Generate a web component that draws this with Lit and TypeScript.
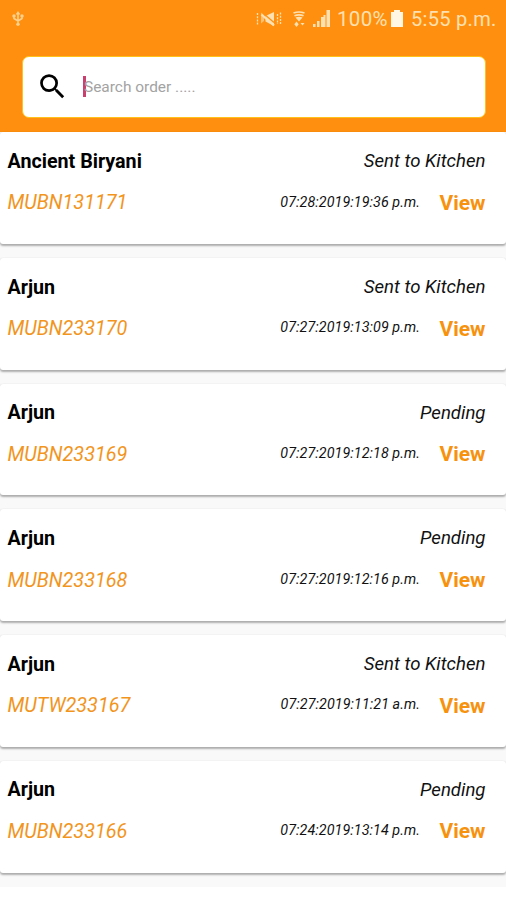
import { LitElement, html, css, svg } from "lit";
import { customElement, property } from "lit/decorators.js";

interface Order {
  customer: string;
  code: string;
  status: string;
  placed: string;
}

const ORDERS: Order[] = [
  { customer: "Ancient Biryani", code: "MUBN131171", status: "Sent to Kitchen", placed: "07:28:2019:19:36 p.m." },
  { customer: "Arjun", code: "MUBN233170", status: "Sent to Kitchen", placed: "07:27:2019:13:09 p.m." },
  { customer: "Arjun", code: "MUBN233169", status: "Pending", placed: "07:27:2019:12:18 p.m." },
  { customer: "Arjun", code: "MUBN233168", status: "Pending", placed: "07:27:2019:12:16 p.m." },
  { customer: "Arjun", code: "MUTW233167", status: "Sent to Kitchen", placed: "07:27:2019:11:21 a.m." },
  { customer: "Arjun", code: "MUBN233166", status: "Pending", placed: "07:24:2019:13:14 p.m." },
];

const usbIcon = svg`<path d="M6 1.5V13M2 5v2.5L6 10M10 5v2.5L6 10" fill="none" stroke="currentColor" stroke-width="1.6"/>
  <path d="M6 0l2.4 3.6H3.6z"/><circle cx="2" cy="5" r="1.7"/><circle cx="10" cy="5" r="1.7"/><circle cx="6" cy="13.2" r="1.7"/>`;

@customElement("status-bar")
export class StatusBar extends LitElement {
  static styles = css`
    :host { display: flex; align-items: center; height: 37px; color: #ffe0b0; padding: 0 10px 0 12px; }
    svg { display: block; fill: currentColor; flex: none; }
    .usb { margin-right: auto; color: #ffd08c; }
    .mute { margin-right: 10px; }
    .wifi { margin-right: 7px; }
    .signal { margin-right: 7px; }
    .text { font-size: 20px; line-height: 38px; white-space: nowrap; }
    .percent { width: 50px; margin-right: 4px; font-size: 20.500px; letter-spacing: 0.300px; }
    .battery { margin-right: 8px; }
    .clock { width: 85px; letter-spacing: 0.3px; }
  `;
  render() {
    return html`
      <svg class="usb" width="12" height="15" viewBox="0 0 12 15">${usbIcon}</svg>
      <svg class="mute" width="26" height="16" viewBox="0 0 26 16">
        <path d="M9.500 5L18 1v14l-8.500-4.500z" />
        <path d="M5 1.500v11l3-2.500V4z" opacity=".6" />
        <path d="M5.500 3.500L18 14.500" fill="none" stroke="currentColor" stroke-width="2.200" />
        <path d="M7.500 2.500L18 11.500" fill="none" stroke="#ff900f" stroke-width="1.200" />
        <path d="M1.500 2v11.500M21.500 3v10M24.500 1.500v12.500" fill="none" stroke="currentColor" stroke-width="1.300" stroke-dasharray="2 1.200" />
      </svg>
      <svg class="wifi" width="14" height="16" viewBox="0 0 14 16">
        <path d="M1.500 2q5.500-2 11 0M2.500 4.800q4.500-2 9 0" fill="none" stroke="currentColor" stroke-width="1.700" />
        <path d="M3.500 6.500q3.500-1.600 7 0L7 10.500zM4.500 10.500l2.200 2.800L4.500 16l-2.200-2.700zM8.500 12h4l-2 2.500z" />
      </svg>
      <svg class="signal" width="17" height="17" viewBox="0 0 17 17">
        <path d="M0 14h2.500v3H0zM4 11h2.500v6H4zM8 7h2.500v10H8zM10.500 5h2v12h-2zM13.500 0H17v17h-3.500z" />
      </svg>
      <span class="text percent">100%</span>
      <svg class="battery" width="12" height="17" viewBox="0 0 12 17">
        <path d="M3 0h6v2h3v15H0V2h3z" fill="#fff6e4" />
      </svg>
      <span class="text clock">5:55 p.m.</span>
    `;
  }
}

@customElement("search-box")
export class SearchBox extends LitElement {
  static styles = css`
    :host { display: flex; align-items: center; box-sizing: border-box; height: 62.500px; margin: 0 20.500px 0 21.500px;
      border: 1.500px solid #ffc21c; border-radius: 7px; background: #fff; }
    .glass { display: block; margin: 0 0 0 13.500px; width: 33px; height: 33px; fill: #000; }
    .caret { width: 2.500px; height: 21px; margin: 0 0 0 14px; background: #c9406e; }
    .hint { margin-left: -1.500px; padding-top: 1px; font-size: 15.450px; color: #a3a3a3; white-space: nowrap; }
  `;
  render() {
    return html`
      <svg class="glass" viewBox="0 0 24 24">
        <path d="M15.500 14h-.79l-.28-.27A6.471 6.471 0 0 0 16 9.500 6.500 6.500 0 1 0 9.500 16c1.610 0 3.090-.59 4.230-1.570l.27.28v.79l5 4.990L20.490 19l-4.990-5zm-6 0C7.010 14 5 11.990 5 9.500S7.010 5 9.500 5 14 7.010 14 9.500 11.990 14 9.500 14z" />
      </svg>
      <span class="caret"></span>
      <span class="hint">Search order .....</span>
    `;
  }
}

@customElement("order-card")
export class OrderCard extends LitElement {
  @property({ attribute: false }) order!: Order;
  static styles = css`
    :host { display: block; box-sizing: border-box; height: 111.700px; padding: 16px 20.500px 0 7.500px; background: #fff;
      border-radius: 3px; box-shadow: 0 1.500px 2px rgba(0, 0, 0, 0.3), 0 0 1px rgba(0, 0, 0, 0.08); color: #111; }
    .row { display: flex; align-items: center; height: 26px; white-space: nowrap; }
    .row + .row { margin-top: 15.600px; }
    .grow { margin-right: auto; }
    .name { font-size: 19.700px; font-weight: 700; color: #000; }
    .status { font-size: 18.600px; font-style: italic; }
    .code { font-size: 19.850px; font-style: italic; color: #f2951d; }
    .placed { font-size: 14.300px; letter-spacing: 0.080px; font-style: italic; margin-right: 19.500px; padding-bottom: 2.500px; }
    .view { font-size: 21px; font-weight: 700; color: #f7920f; }
  `;
  render() {
    const o = this.order;
    return html`
      <div class="row"><span class="name grow">${o.customer}</span><span class="status">${o.status}</span></div>
      <div class="row">
        <span class="code grow">${o.code}</span><span class="placed">${o.placed}</span><span class="view">View</span>
      </div>
    `;
  }
}

@customElement("app-root")
export class AppRoot extends LitElement {
  static styles = css`
    :host { display: block; height: 900px; overflow: hidden; background: #f9f9f9; font-family: Roboto, "Liberation Sans", sans-serif; }
    .header { box-sizing: border-box; height: 132.400px; background: #ff900f; }
    .search { margin-top: 18.500px; }
    .list { display: flex; flex-direction: column; gap: 14px; }
    .next { height: 40px; background: #fff; }
  `;
  render() {
    return html`
      <div class="header"><status-bar></status-bar><search-box class="search"></search-box></div>
      <div class="list">
        ${ORDERS.map((o) => html`<order-card .order=${o}></order-card>`)}
        <div class="next"></div>
      </div>
    `;
  }
}
